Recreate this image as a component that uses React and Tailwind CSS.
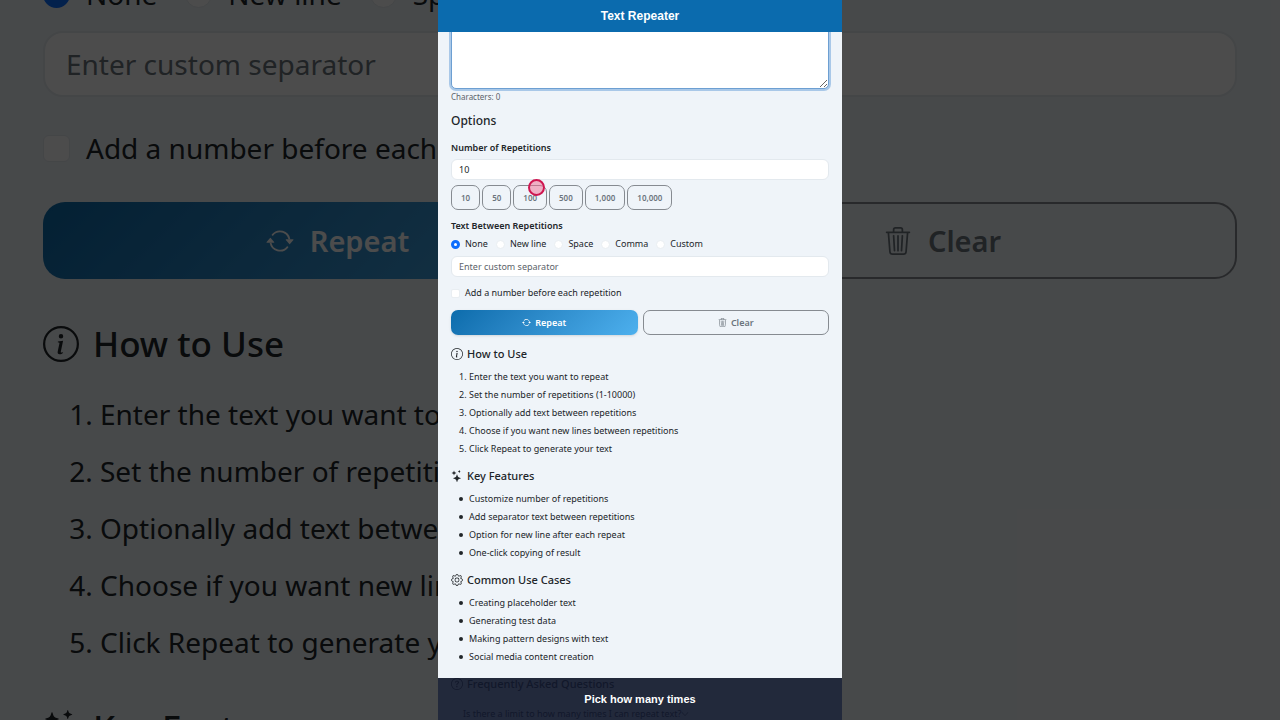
import React, { useState } from "react";
import {
  BsArrowRepeat,
  BsChevronDown,
  BsGear,
  BsInfoCircle,
  BsQuestionCircle,
  BsStars,
  BsTrash3,
} from "react-icons/bs";

const PRESETS = [10, 50, 100, 500, 1000, 10000];
const SEPARATORS = ["None", "New line", "Space", "Comma", "Custom"];

const STEPS = [
  "Enter the text you want to repeat",
  "Set the number of repetitions (1-10000)",
  "Optionally add text between repetitions",
  "Choose if you want new lines between repetitions",
  "Click Repeat to generate your text",
];

const FEATURES = [
  "Customize number of repetitions",
  "Add separator text between repetitions",
  "Option for new line after each repeat",
  "One-click copying of result",
];

const USE_CASES = [
  "Creating placeholder text",
  "Generating test data",
  "Making pattern designs with text",
  "Social media content creation",
];

const BULLET =
  "flex items-center gap-[6px] before:size-1 before:rounded-full before:bg-current before:content-['']";

function Section({ icon: Icon, title, items, ordered }) {
  const List = ordered ? "ol" : "ul";
  return (
    <section className="mb-[9px]">
      <h2 className="mb-[5px] flex items-center gap-1 text-[11px] leading-[18px] font-medium">
        <Icon className="size-3" /> {title}
      </h2>
      <List className={ordered ? "list-decimal pl-[18px]" : "pl-2"}>
        {items.map((item) => (
          <li key={item} className={ordered ? "" : BULLET}>
            {item}
          </li>
        ))}
      </List>
    </section>
  );
}

// Enlarged, dimmed copy of the form that fills the window behind the panel
function Backdrop() {
  return (
    <div
      inert
      aria-hidden="true"
      className="absolute inset-0 overflow-hidden bg-[#eff4f8] px-[43px] text-[28px] leading-[57px]"
    >
      <div className="-mt-[21px] flex h-[30px] items-center gap-7">
        {SEPARATORS.map((name) => (
          <label key={name} className="flex items-center gap-4">
            <input
              type="radio"
              name="backdrop-separator"
              defaultChecked={name === "None"}
              className="size-[27px] appearance-none rounded-full border border-[#e3e9ee] bg-white checked:border-8 checked:border-[#0d6efd]"
            />
            {name}
          </label>
        ))}
      </div>
      <input
        type="text"
        aria-label="Custom separator"
        placeholder="Enter custom separator"
        className="mt-[22px] block h-[66px] w-full rounded-[20px] border-2 border-[#e3e9ee] bg-white px-[21px] placeholder:text-[#6c757d]"
      />
      <label className="mt-9 flex h-[30px] items-center gap-4">
        <input
          type="checkbox"
          className="size-[27px] appearance-none rounded-[6px] border border-[#e3e9ee] bg-white"
        />
        Add a number before each repetition
      </label>
      <div className="mt-[39px] grid grid-cols-2 gap-4 text-[29px] font-semibold">
        <button className="flex h-[77px] items-center justify-center gap-4 rounded-[22px] bg-linear-135 from-[#0b6cac] to-[#4db0ee] text-white">
          <BsArrowRepeat className="size-7" /> Repeat
        </button>
        <button className="flex h-[77px] items-center justify-center gap-4 rounded-[22px] border-2 border-[#868b91] text-[#6c757d]">
          <BsTrash3 className="size-7" /> Clear
        </button>
      </div>
      <h2 className="mt-9 mb-[14px] flex items-center gap-[14px] text-[35px] leading-[57px] font-medium">
        <BsInfoCircle className="size-9" /> How to Use
      </h2>
      <ol className="mb-7 list-decimal pl-[57px]">
        {STEPS.map((step) => (
          <li key={step}>{step}</li>
        ))}
      </ol>
      <h2 className="flex items-center gap-[14px] text-[35px] leading-[57px] font-medium">
        <BsStars className="size-9" /> Key Features
      </h2>
      <div className="absolute inset-0 bg-black/70" />
    </div>
  );
}

function App() {
  const [text, setText] = useState("");
  const [count, setCount] = useState("10");
  const [separator, setSeparator] = useState("None");
  const [custom, setCustom] = useState("");
  const [numbered, setNumbered] = useState(false);

  const clear = () => {
    setText("");
    setCustom("");
  };

  return (
    <div className="relative h-screen overflow-hidden font-['Noto_Sans',sans-serif] text-[#212529]">
      <Backdrop />

      <div className="relative mx-auto flex h-full w-[404px] max-w-full flex-col bg-[#eff4f9] text-[9px] leading-[18px]">
        <header className="z-10 flex h-8 shrink-0 items-center justify-center bg-[#0b6bae] font-['Liberation_Sans',sans-serif] text-white">
          <h1 className="text-[12px] font-bold">Text Repeater</h1>
        </header>

        <main className="min-h-0 flex-1 overflow-hidden px-[13px]">
          <textarea
            aria-label="Text to repeat"
            value={text}
            onChange={(e) => setText(e.target.value)}
            className="-mt-[23px] block h-20 w-full resize-y rounded-[5px] border border-[#6d9fd2] bg-white px-2 py-1 ring-2 ring-[#a9c8e8] outline-none"
          />
          <p className="mt-[2px] text-[8px] leading-[11px] text-[#5c636a]">Characters: {text.length}</p>

          <h2 className="mt-[10px] text-[12px] leading-[18px] font-medium">Options</h2>

          <label htmlFor="count" className="mt-[9px] block font-semibold">
            Number of Repetitions
          </label>
          <input
            id="count"
            type="text"
            inputMode="numeric"
            value={count}
            onChange={(e) => setCount(e.target.value)}
            className="mt-[2px] block h-[21px] w-full rounded-[6px] border border-[#e3e9ee] bg-white px-[7px]"
          />
          <div className="mt-[5px] flex gap-[2px]">
            {PRESETS.map((n) => (
              <div key={n} className="relative">
                <button
                  onClick={() => setCount(String(n))}
                  className="h-[25px] rounded-[7px] border border-[#868b91] px-[9px] text-[8px] font-semibold text-[#6c757d]"
                >
                  {n.toLocaleString("en-US")}
                </button>
                {n === 100 && (
                  <span className="absolute -top-[6px] right-0.5 size-[17px] rounded-full border-2 border-[#cf1650] bg-[#f06a92]/50" />
                )}
              </div>
            ))}
          </div>

          <fieldset className="mt-[7px]">
            <legend className="font-semibold">Text Between Repetitions</legend>
            <div className="flex gap-2">
              {SEPARATORS.map((name) => (
                <label key={name} className="flex items-center gap-[5px]">
                  <input
                    type="radio"
                    name="separator"
                    checked={separator === name}
                    onChange={() => setSeparator(name)}
                    className="size-[9px] appearance-none rounded-full border border-[#e9eef2] bg-white checked:border-[3px] checked:border-[#0d6efd]"
                  />
                  {name}
                </label>
              ))}
            </div>
          </fieldset>
          <input
            type="text"
            aria-label="Custom separator"
            placeholder="Enter custom separator"
            value={custom}
            onChange={(e) => setCustom(e.target.value)}
            className="mt-[3px] block h-[21px] w-full rounded-[6px] border border-[#e3e9ee] bg-white px-[7px] placeholder:text-[#5c636a]"
          />

          <label className="mt-[7px] flex items-center gap-[5px]">
            <input
              type="checkbox"
              checked={numbered}
              onChange={(e) => setNumbered(e.target.checked)}
              className="size-[9px] appearance-none rounded-[2px] border border-[#e9eef2] bg-white checked:bg-[#0d6efd]"
            />
            Add a number before each repetition
          </label>

          <div className="mt-2 mb-[10px] grid grid-cols-2 gap-[5px] font-semibold">
            <button className="flex h-[25px] items-center justify-center gap-1 rounded-[7px] bg-linear-135 from-[#0b6cac] to-[#4db0ee] text-white shadow-sm">
              <BsArrowRepeat className="size-[9px]" /> Repeat
            </button>
            <button
              onClick={clear}
              className="flex h-[25px] items-center justify-center gap-1 rounded-[7px] border border-[#868b91] text-[#6c757d]"
            >
              <BsTrash3 className="size-[9px]" /> Clear
            </button>
          </div>

          <Section icon={BsInfoCircle} title="How to Use" items={STEPS} ordered />
          <Section icon={BsStars} title="Key Features" items={FEATURES} />
          <Section icon={BsGear} title="Common Use Cases" items={USE_CASES} />

          <h2 className="flex items-center gap-1 text-[11px] leading-[18px] font-medium">
            <BsQuestionCircle className="size-3" /> Frequently Asked Questions
          </h2>
          <button className="mt-3 flex items-center pl-3">
            Is there a limit to how many times I can repeat text?
            <BsChevronDown className="size-2" />
          </button>
        </main>

        {/* Caption bar, the page shows faintly through it */}
        <footer className="absolute inset-x-0 bottom-0 flex h-[42px] items-center justify-center bg-[#10172a]/92 font-['Liberation_Sans',sans-serif] text-[11px] font-bold text-white">
          Pick how many times
        </footer>
      </div>
    </div>
  );
}

export default App;
